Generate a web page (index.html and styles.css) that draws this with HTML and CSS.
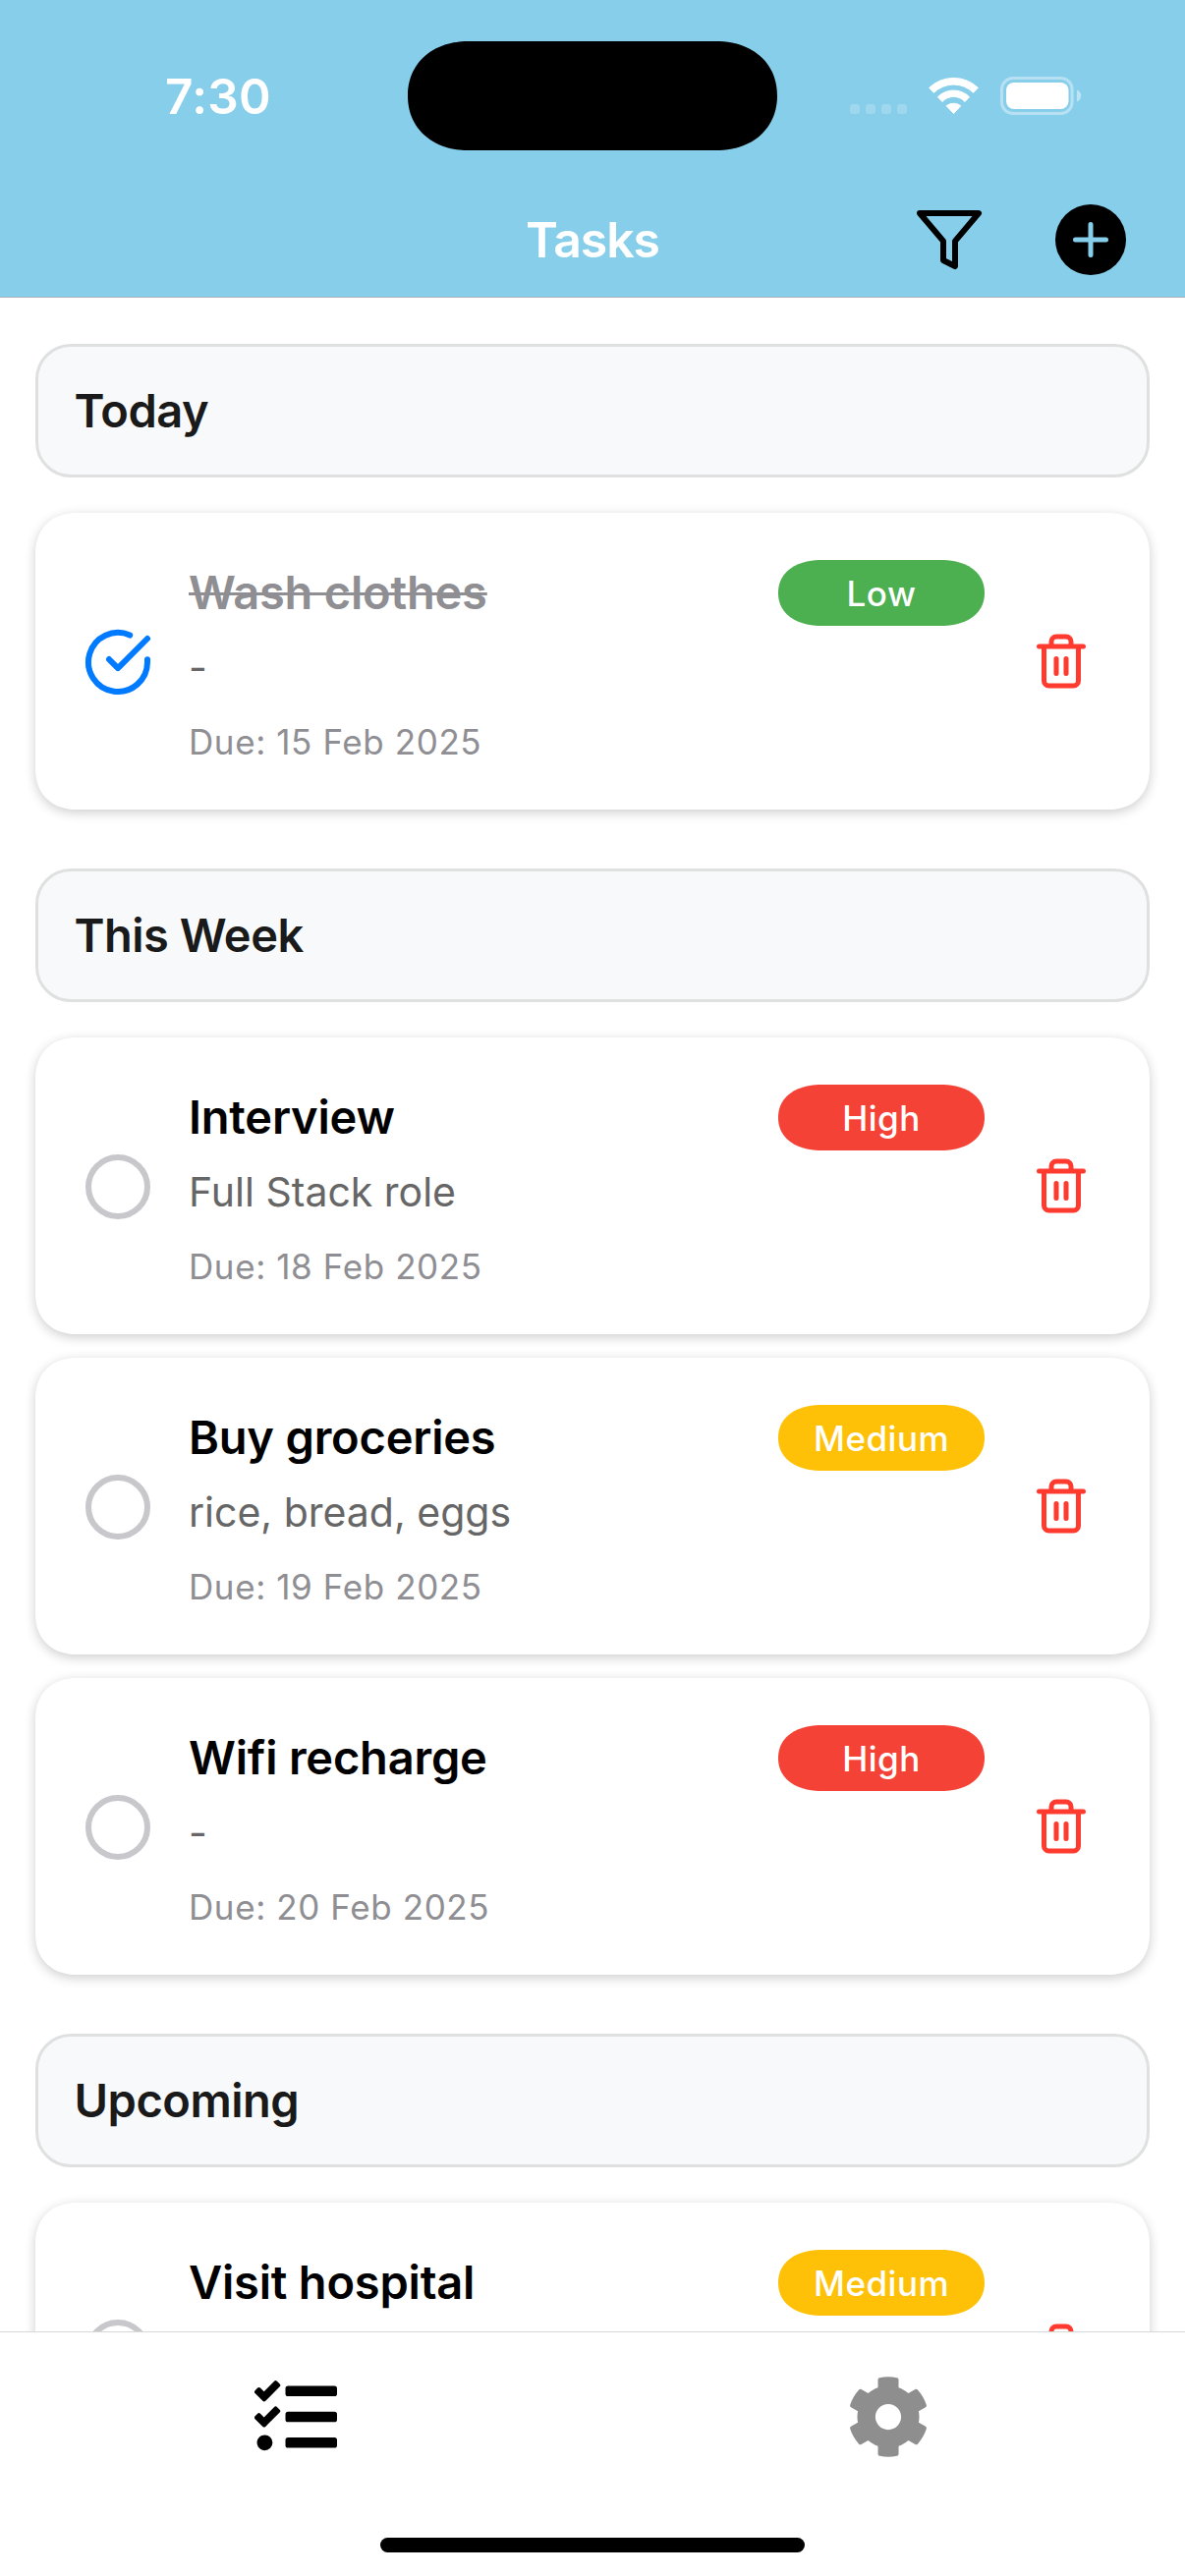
FILE: index.html
```html
<!DOCTYPE html>
<html lang="en">
<head>
<meta charset="utf-8">
<title>Tasks</title>
<link rel="stylesheet" href="styles.css">
</head>
<body>
<svg class="defs" aria-hidden="true">
  <symbol id="trash" viewBox="0 0 24 24">
    <path d="M3 6h18M19 6v14a2 2 0 0 1-2 2H7a2 2 0 0 1-2-2V6m3 0V4a2 2 0 0 1 2-2h4a2 2 0 0 1 2 2v2M10 11v6M14 11v6"/>
  </symbol>
  <symbol id="circle" viewBox="0 0 24 24">
    <circle cx="12" cy="12" r="10"/>
  </symbol>
  <symbol id="check-circle" viewBox="0 0 24 24">
    <path d="M22 11.08V12a10 10 0 1 1-5.93-9.14"/>
    <path d="M22 4 12 14.01l-3-3"/>
  </symbol>
</svg>

<header class="header">
  <div class="status">
    <span class="time">7:30</span>
    <span class="island"></span>
    <div class="indicators">
      <svg class="signal" viewBox="0 0 58 39" fill="#fff">
        <rect x="0" y="28" width="10" height="10" rx="3"/>
        <rect x="16" y="28" width="10" height="10" rx="3"/>
        <rect x="32" y="28" width="10" height="10" rx="3"/>
        <rect x="48" y="28" width="10" height="10" rx="3"/>
      </svg>
      <svg class="wifi" viewBox="0 0 51 39" fill="#fff" stroke="#fff" stroke-width="1" stroke-linejoin="round">
        <path d="M.7 11.3A36 36 0 0 1 50.3 11.3L45.6 16.3A28.7 28.7 0 0 0 5.4 16.3Z"/>
        <path d="M9.4 20.7A22.7 22.7 0 0 1 41.6 20.7L37 25.5A15.5 15.5 0 0 0 14 25.5Z"/>
        <path d="M18.2 29.7A12.3 12.3 0 0 1 32.8 29.7L25.5 37.6Z"/>
      </svg>
      <svg class="battery" viewBox="0 0 82 39">
        <rect x="1.5" y="1.5" width="71.6" height="36" rx="11.5" fill="none" stroke="#fff" stroke-opacity=".4" stroke-width="3"/>
        <rect x="6" y="6" width="63.5" height="27" rx="8" fill="#fff"/>
        <path d="M78 13.5c2.6 1 4.2 3.2 4.2 6s-1.6 5-4.2 6z" fill="#fff" fill-opacity=".45"/>
      </svg>
    </div>
  </div>
  <div class="nav">
    <h1 class="nav-title">Tasks</h1>
    <div class="nav-actions">
      <svg class="nav-icon" viewBox="0 0 24 24" fill="none" stroke="#000" stroke-width="2" stroke-linejoin="round">
        <path d="M22 3H2l8 9.46V19l4 2v-8.54z"/>
      </svg>
      <svg class="nav-icon" viewBox="0 0 72 72">
        <circle cx="36" cy="36" r="36"/>
        <path d="M36 20.5v31M20.5 36h31" stroke="#87ceeb" stroke-width="5" stroke-linecap="round"/>
      </svg>
    </div>
  </div>
</header>

<main class="list">
  <section class="group">
    <h2 class="group-title">Today</h2>
    <article class="card">
      <svg class="check done"><use href="#check-circle"/></svg>
      <div class="body">
        <div class="head"><h3 class="title struck">Wash clothes</h3><span class="pill low">Low</span></div>
        <p class="desc">-</p>
        <p class="due">Due: 15 Feb 2025</p>
      </div>
      <svg class="trash"><use href="#trash"/></svg>
    </article>
  </section>

  <section class="group">
    <h2 class="group-title">This Week</h2>
    <article class="card">
      <svg class="check"><use href="#circle"/></svg>
      <div class="body">
        <div class="head"><h3 class="title">Interview</h3><span class="pill high">High</span></div>
        <p class="desc">Full Stack role</p>
        <p class="due">Due: 18 Feb 2025</p>
      </div>
      <svg class="trash"><use href="#trash"/></svg>
    </article>
    <article class="card">
      <svg class="check"><use href="#circle"/></svg>
      <div class="body">
        <div class="head"><h3 class="title">Buy groceries</h3><span class="pill medium">Medium</span></div>
        <p class="desc">rice, bread, eggs</p>
        <p class="due">Due: 19 Feb 2025</p>
      </div>
      <svg class="trash"><use href="#trash"/></svg>
    </article>
    <article class="card">
      <svg class="check"><use href="#circle"/></svg>
      <div class="body">
        <div class="head"><h3 class="title">Wifi recharge</h3><span class="pill high">High</span></div>
        <p class="desc">-</p>
        <p class="due">Due: 20 Feb 2025</p>
      </div>
      <svg class="trash"><use href="#trash"/></svg>
    </article>
  </section>

  <section class="group">
    <h2 class="group-title">Upcoming</h2>
    <article class="card">
      <svg class="check"><use href="#circle"/></svg>
      <div class="body">
        <div class="head"><h3 class="title">Visit hospital</h3><span class="pill medium">Medium</span></div>
      </div>
      <svg class="trash"><use href="#trash"/></svg>
    </article>
  </section>
</main>

<footer class="footer">
  <nav class="tabs">
    <a class="tab"><svg class="tab-icon" viewBox="0 0 512 512" fill="#000"><path d="M139.61 35.5a12 12 0 0 0-17 0L58.93 98.81l-22.7-22.12a12 12 0 0 0-17 0L3.53 92.41a12 12 0 0 0 0 17l47.59 47.4a12.78 12.78 0 0 0 17.61 0l15.59-15.62L156.52 69a12.09 12.09 0 0 0 .09-17zm0 159.19a12 12 0 0 0-17 0l-63.68 63.72-22.7-22.1a12 12 0 0 0-17 0L3.53 252a12 12 0 0 0 0 17L51 316.5a12.77 12.77 0 0 0 17.6 0l15.7-15.69 72.2-72.22a12 12 0 0 0 .09-16.9zM64 368c-26.49 0-48.59 21.5-48.59 48S37.53 464 64 464a48 48 0 0 0 0-96zm432 16H208a16 16 0 0 0-16 16v32a16 16 0 0 0 16 16h288a16 16 0 0 0 16-16v-32a16 16 0 0 0-16-16zm0-320H208a16 16 0 0 0-16 16v32a16 16 0 0 0 16 16h288a16 16 0 0 0 16-16V80a16 16 0 0 0-16-16zm0 160H208a16 16 0 0 0-16 16v32a16 16 0 0 0 16 16h288a16 16 0 0 0 16-16v-32a16 16 0 0 0-16-16z"/></svg></a>
    <a class="tab"><svg class="tab-icon" viewBox="0 0 512 512" fill="#8e8e8f"><path d="M487.4 315.7l-42.6-24.6c4.3-23.2 4.3-47 0-70.2l42.6-24.6c4.9-2.8 7.1-8.6 5.5-14-11.1-35.6-30-67.8-54.7-94.6-3.8-4.1-10-5.1-14.8-2.3L380.8 110c-17.9-15.4-38.5-27.3-60.8-35.1V25.8c0-5.6-3.9-10.5-9.4-11.7-36.7-8.2-74.3-7.8-109.2 0-5.5 1.2-9.4 6.1-9.4 11.7V75c-22.2 7.9-42.8 19.8-60.8 35.1L88.7 85.5c-4.9-2.8-11-1.9-14.8 2.3-24.7 26.7-43.6 58.9-54.7 94.6-1.7 5.4.6 11.2 5.5 14L67.3 221c-4.3 23.2-4.3 47 0 70.2l-42.6 24.6c-4.9 2.8-7.1 8.6-5.5 14 11.1 35.6 30 67.8 54.7 94.6 3.8 4.1 10 5.1 14.8 2.3l42.6-24.6c17.9 15.4 38.5 27.3 60.8 35.1v49.2c0 5.6 3.9 10.5 9.4 11.7 36.7 8.2 74.3 7.8 109.2 0 5.5-1.2 9.4-6.1 9.4-11.7v-49.2c22.2-7.9 42.8-19.8 60.8-35.1l42.6 24.6c4.9 2.8 11 1.9 14.8-2.3 24.7-26.7 43.6-58.9 54.7-94.6 1.5-5.5-.7-11.3-5.6-14.1zM256 336c-44.1 0-80-35.9-80-80s35.9-80 80-80 80 35.9 80 80-35.9 80-80 80z"/></svg></a>
  </nav>
  <div class="home-bar"></div>
</footer>
</body>
</html>
```
FILE: styles.css
```css
* {
  box-sizing: border-box;
  margin: 0;
  padding: 0;
}

body {
  display: flex;
  flex-direction: column;
  width: 1206px;
  height: 2622px;
  overflow: hidden;
  background: #fff;
  font-family: Inter, "Liberation Sans", sans-serif;
}

svg {
  display: block;
  flex: none;
}

.defs {
  display: none;
}

/* Header */
.header {
  flex: none;
  height: 303px;
  background: #87ceeb;
  border-bottom: 1px solid #a9b2b6;
}

.status {
  display: grid;
  grid-template-columns: 415px 376px 1fr;
  align-items: center;
  height: 177px;
  padding: 41.5px 0 24.5px;
}

.time {
  padding: 1px 0 0 168px;
  color: #fff;
  font-size: 49.5px;
  font-weight: 600;
  line-height: 60px;
  letter-spacing: .3px;
}

.island {
  height: 111px;
  border-radius: 62px / 55.5px;
  corner-shape: superellipse(1.1);
  background: #000;
}

.indicators {
  display: flex;
  padding: 1px 0 0 74px;
}

.signal {
  width: 58px;
  height: 39px;
  opacity: .2;
}

.wifi {
  width: 51px;
  height: 39px;
  margin-left: 22px;
}

.battery {
  width: 82px;
  height: 39px;
  margin-left: 22px;
  overflow: visible;
}

.nav {
  display: grid;
  grid-template-columns: 1fr auto 1fr;
  align-items: center;
  height: 125px;
  padding: 31px 60px 22px;
}

.nav-title {
  grid-column: 2;
  color: #fff;
  font-size: 50px;
  font-weight: 600;
  line-height: 60px;
  letter-spacing: -1.1px;
}

.nav-actions {
  display: flex;
  justify-content: flex-end;
  gap: 72px;
}

.nav-icon {
  width: 72px;
  height: 72px;
}

/* Task list */
.list {
  display: flex;
  flex: 1;
  flex-direction: column;
  gap: 60px;
  min-height: 0;
  padding: 47px 36px 0;
  overflow: hidden;
}

.group {
  display: flex;
  flex: none;
  flex-direction: column;
  gap: 24px;
}

.group-title {
  height: 136px;
  margin-bottom: 12px;
  padding: 0 36.5px;
  border: 3px solid #dfe0e0;
  border-radius: 36px;
  background: #f8f9fb;
  color: #1a1a1a;
  font-size: 47px;
  font-weight: 600;
  line-height: 130px;
  letter-spacing: -.5px;
}

.card {
  display: flex;
  align-items: center;
  height: 302px;
  padding: 48px 60px 48px 48px;
  border-radius: 42px;
  corner-shape: superellipse(1.15);
  background: #fff;
  box-shadow: 0 3px 12px rgba(0, 0, 0, .2);
}

.check {
  width: 72px;
  height: 72px;
  margin-top: 2px;
  fill: none;
  stroke: #c7c7cc;
  stroke-width: 2;
  stroke-linecap: round;
  stroke-linejoin: round;
}

.check.done {
  stroke: #007aff;
}

.body {
  flex: 1;
  align-self: stretch;
  margin: 0 48px 0 36px;
}

.head {
  display: flex;
  align-items: flex-start;
  justify-content: space-between;
  height: 67px;
}

.title {
  color: #000;
  font-size: 47px;
  font-weight: 600;
  line-height: 65px;
  letter-spacing: -.2px;
}

.title.struck {
  color: #8e8e93;
  text-decoration: line-through 3px;
}

.pill {
  width: 210px;
  height: 67px;
  padding-top: 1px;
  border-radius: 45px / 33.5px;
  corner-shape: superellipse(1.15);
  color: #fff;
  font-size: 35px;
  font-weight: 500;
  line-height: 66px;
  letter-spacing: .5px;
  text-align: center;
}

.low {
  background: #4caf50;
}

.medium {
  background: #ffc107;
}

.high {
  background: #f44336;
}

.desc {
  margin-top: 17px;
  color: #666;
  font-size: 41px;
  line-height: 50px;
}

.due {
  margin-top: 30px;
  color: #8e8e93;
  font-size: 35px;
  line-height: 42px;
  letter-spacing: .6px;
}

.trash {
  width: 60px;
  height: 60px;
  fill: none;
  stroke: #ff3b30;
  stroke-width: 2;
  stroke-linecap: round;
  stroke-linejoin: round;
}

/* Tab bar */
.footer {
  display: flex;
  flex: none;
  flex-direction: column;
  align-items: center;
  height: 249px;
  border-top: 1px solid #d8d8d8;
  background: #fff;
}

.tabs {
  display: flex;
  width: 100%;
  height: 209px;
  padding: 44px 1px 0 0;
}

.tab {
  display: flex;
  flex: 1;
  justify-content: center;
}

.tab-icon {
  width: 84px;
  height: 84px;
}

.home-bar {
  width: 432px;
  height: 15px;
  border-radius: 8px;
  background: #000;
}
```
